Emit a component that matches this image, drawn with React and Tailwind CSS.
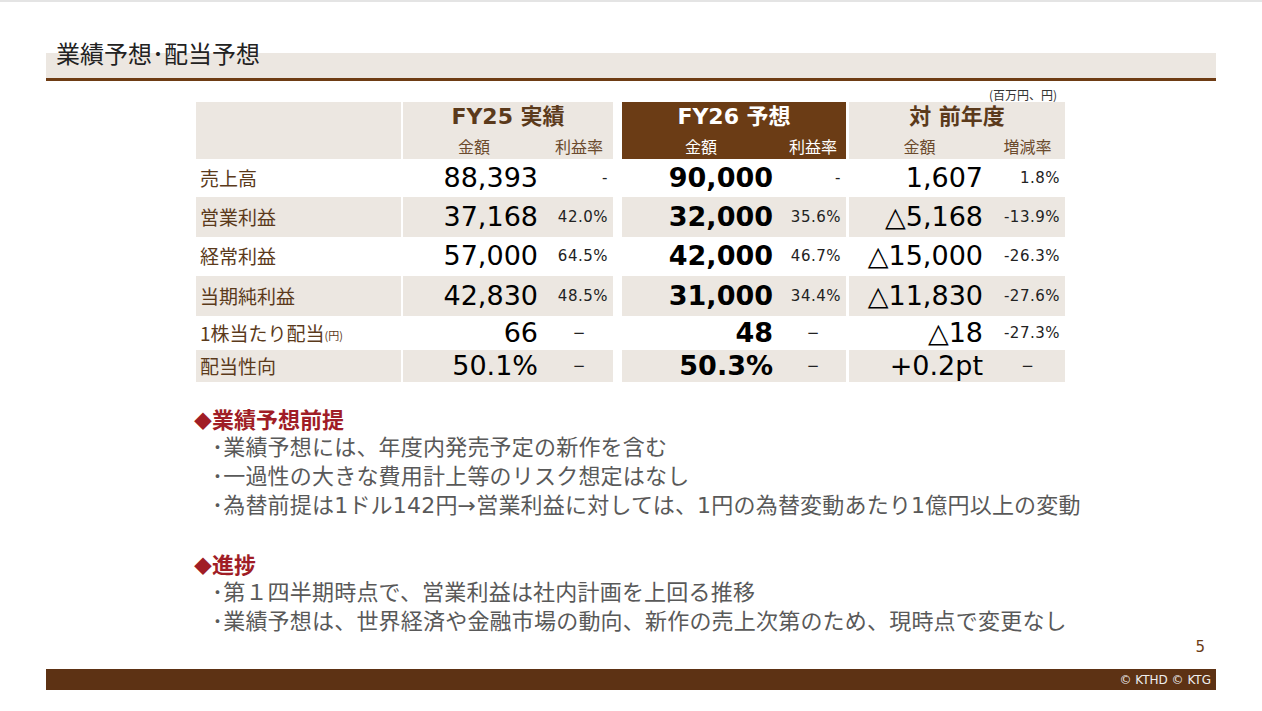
import React from 'react'

const BEIGE = 'bg-[#ece7e1]'

const rows = [
    { label: '売上高', h: 'h-[38px]', shade: false, v: ['88,393', '-', '90,000', '-', '1,607', '1.8%'] },
    { label: '営業利益', h: 'h-[40px]', shade: true, v: ['37,168', '42.0%', '32,000', '35.6%', '△5,168', '-13.9%'] },
    { label: '経常利益', h: 'h-[39px]', shade: false, v: ['57,000', '64.5%', '42,000', '46.7%', '△15,000', '-26.3%'] },
    { label: '当期純利益', h: 'h-[40px]', shade: true, v: ['42,830', '48.5%', '31,000', '34.4%', '△11,830', '-27.6%'] },
    { label: '1株当たり配当', unit: '(円)', h: 'h-[34px]', shade: false, v: ['66', '−', '48', '−', '△18', '-27.3%'] },
    { label: '配当性向', h: 'h-[32px]', shade: true, v: ['50.1%', '−', '50.3%', '−', '+0.2pt', '−'] },
]

// column groups: group width, amount sub column width, gap after
const groups = [
    { w: 'w-[210px]', amt: 'w-[142px]', gap: 'mr-[9px]', bold: false },
    { w: 'w-[224px]', amt: 'w-[158px]', gap: 'mr-[3px]', bold: true },
    { w: 'w-[216px]', amt: 'w-[141px]', gap: '', bold: false },
]

const num = { fontFamily: '"DejaVu Sans", "Noto Sans CJK JP", sans-serif' }
const jp = { fontFamily: '"Noto Sans CJK JP", sans-serif' }

const Rate = ({ value }) => {
    if (value === '−') {
        return <div className="flex-1 text-center text-[15px] text-[#222]">{value}</div>
    }
    return <div className="flex-1 text-right pr-[5px] text-[15px] tracking-[0.5px] text-[#222]">{value}</div>
}

const DataRow = ({ row }) => {
    const bg = row.shade ? BEIGE : 'bg-white'
    return (
        <div className={`flex ${row.h}`}>
            <div className={`w-[205px] mr-[2px] ${bg} flex items-center pl-[4px] text-[19px] text-[#5b3a1b]`} style={jp}>
                {row.label}
                {row.unit && <span className="text-[11px] mt-[4px]">{row.unit}</span>}
            </div>
            {groups.map((g, i) => (
                <div key={i} className={`${g.w} ${g.gap} ${bg} flex items-center`} style={num}>
                    <div className={`${g.amt} text-right pr-[7px] text-[27px] text-black ${g.bold ? 'font-bold' : ''}`}>
                        {row.v[i * 2]}
                    </div>
                    <Rate value={row.v[i * 2 + 1]} />
                </div>
            ))}
        </div>
    )
}

const HeaderCell = ({ g, title, sub, dark }) => (
    <div className={`${g.w} ${g.gap} ${dark ? 'bg-[#6b3c15] text-white' : `${BEIGE} text-[#5b3a1b]`} pt-[3px]`}>
        <div className="text-center text-[22px] leading-[24px] font-bold" style={num}>{title}</div>
        <div className={`flex mt-[7px] text-[16px] leading-[20px] ${dark ? 'text-white' : 'text-[#6b4a2c]'}`} style={jp}>
            <div className={`${g.amt} text-center`}>{sub[0]}</div>
            <div className="flex-1 text-center">{sub[1]}</div>
        </div>
    </div>
)

const notes = [
    {
        title: '業績予想前提',
        lines: [
            '･業績予想には、年度内発売予定の新作を含む',
            '･一過性の大きな費用計上等のリスク想定はなし',
            '･為替前提は1ドル142円→営業利益に対しては、1円の為替変動あたり1億円以上の変動',
        ],
    },
    {
        title: '進捗',
        lines: [
            '･第１四半期時点で、営業利益は社内計画を上回る推移',
            '･業績予想は、世界経済や金融市場の動向、新作の売上次第のため、現時点で変更なし',
        ],
    },
]

const App = () => {
    return (
        <div className="w-[1262px] h-[711px] bg-white border-t-2 border-[#e4e4e4] overflow-hidden">
            {/* title */}
            <div className="pt-[38px] px-[46px]">
                <div
                    className="h-[38px] pl-[10px] text-[24px] leading-[26px] text-[#222] bg-[linear-gradient(to_bottom,white_13px,#ece7e1_13px)]"
                    style={jp}
                >
                    業績予想･配当予想
                </div>
                <div className="h-[3px] bg-[#6e3c14]"></div>
            </div>

            {/* table */}
            <div className="ml-[196px] w-[869px]">
                <div className="mt-[6px] h-[15px] text-right pr-[8px] text-[12px] leading-[15px] text-[#333]" style={jp}>
                    (百万円、円)
                </div>
                <div className="flex h-[57px]">
                    <div className={`w-[205px] mr-[2px] ${BEIGE}`}></div>
                    <HeaderCell g={groups[0]} title="FY25 実績" sub={['金額', '利益率']} />
                    <HeaderCell g={groups[1]} title="FY26 予想" sub={['金額', '利益率']} dark />
                    <HeaderCell g={groups[2]} title="対 前年度" sub={['金額', '増減率']} />
                </div>
                {rows.map((row, i) => (
                    <DataRow key={i} row={row} />
                ))}
            </div>

            {/* notes */}
            <div className="ml-[194px] mt-[21px]" style={num}>
                {notes.map((n, i) => (
                    <div key={i} className={i > 0 ? 'mt-[28px]' : ''}>
                        <div className="h-[30px] text-[22px] leading-[30px] font-bold text-[#a01d26]" style={jp}>
                            <span className="text-[18px]">◆</span>{n.title}
                        </div>
                        {n.lines.map((l, j) => (
                            <div key={j} className="h-[29px] pl-[18px] text-[22px] leading-[29px] text-[#595959] tracking-[0.2px]">
                                {l}
                            </div>
                        ))}
                    </div>
                ))}
            </div>

            {/* footer */}
            <div className="mt-[2px] h-[18px] flex justify-end pr-[57px] text-[15px] leading-[18px] text-[#6b3c15]" style={num}>
                5
            </div>
            <div className="mt-[13px] mx-[46px] h-[21px] bg-[#5d3214] flex items-center justify-end pr-[5px]">
                <span className="text-[12px] text-[#eeeeee]" style={{ fontFamily: '"DejaVu Sans", sans-serif' }}>
                    © KTHD © KTG
                </span>
            </div>
        </div>
    )
}

export default App
